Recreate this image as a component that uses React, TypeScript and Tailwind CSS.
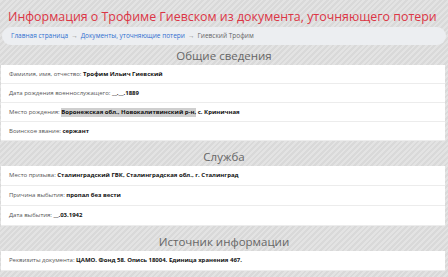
import React from "react";

const stripes =
  "bg-[repeating-linear-gradient(-45deg,#d9d9d9_0px,#d9d9d9_2px,#e3e3e3_2px,#e3e3e3_4px)]";

function Row({ label, tall, children }: { label: string; tall?: boolean; children: React.ReactNode }) {
  return (
    <div
      className={`${tall ? "h-[20px]" : "h-[19px]"} bg-white border-b border-[#ececec] flex items-center pl-[8px] text-[6px] text-[#555] whitespace-nowrap`}
    >
      <span>{label}&nbsp;</span>
      <span className="font-bold text-[#111]">{children}</span>
    </div>
  );
}

function Section({ title, mt, children }: { title: string; mt: string; children: React.ReactNode }) {
  return (
    <div className={mt}>
      <div className="h-[18px] flex items-center justify-center text-[11.5px] text-[#666] leading-none">
        {title}
      </div>
      <div className="ml-[1px] w-[444px]">{children}</div>
    </div>
  );
}

export default function App() {
  return (
    <div
      className={`w-[448px] h-[277px] overflow-hidden ${stripes}`}
      style={{ fontFamily: '"Open Sans", "Noto Sans", sans-serif' }}
    >
      <div className="pt-[7px] pl-[8px] text-[12.4px] leading-[19px] font-medium text-[#dc3545] whitespace-nowrap">
        Информация о Трофиме Гиевском из документа, уточняющего потери
      </div>
      <div className="mx-[2px] mt-[1px] h-[18px] rounded-full bg-[#eceef1] flex items-center pl-[9px] text-[6.5px] whitespace-nowrap">
        <span className="text-[#2f6fd0]">Главная страница</span>
        <span className="text-[#888] mx-[3px]">→</span>
        <span className="text-[#2f6fd0]">Документы, уточняющие потери</span>
        <span className="text-[#888] mx-[3px]">→</span>
        <span className="text-[#666]">Гиевский Трофим</span>
      </div>
      <Section title="Общие сведения" mt="mt-[2px]">
        <Row label="Фамилия, имя, отчество:">Трофим Ильич Гиевский</Row>
        <Row label="Дата рождения военнослужащего:">__.__.1889</Row>
        <div className="h-[19px] bg-white border-b border-[#ececec] flex items-center pl-[8px] text-[6px] text-[#555] whitespace-nowrap">
          <span>Место рождения:&nbsp;</span>
          <span className="font-bold text-[#111] bg-[#cfcfcf]">Воронежская обл., Новокалитвинский р-н,</span>
          <span className="font-bold text-[#111]">&nbsp;с. Криничная</span>
        </div>
        <Row label="Воинское звание:">сержант</Row>
      </Section>
      <Section title="Служба" mt="mt-[7px]">
        <Row tall label="Место призыва:">Сталинградский ГВК, Сталинградская обл., г. Сталинград</Row>
        <Row tall label="Причина выбытия:">пропал без вести</Row>
        <Row tall label="Дата выбытия:">__.03.1942</Row>
      </Section>
      <Section title="Источник информации" mt="mt-[7px]">
        <Row tall label="Реквизиты документа:">ЦАМО. Фонд 58. Опись 18004. Единица хранения 467.</Row>
      </Section>
    </div>
  );
}
